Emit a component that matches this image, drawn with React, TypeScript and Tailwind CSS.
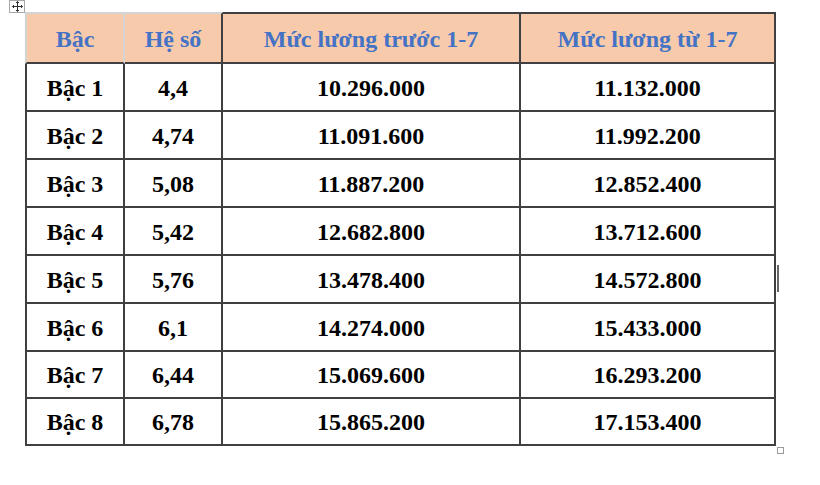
import React from "react";

const rows: [string, string, string, string][] = [
  ["Bậc 1", "4,4", "10.296.000", "11.132.000"],
  ["Bậc 2", "4,74", "11.091.600", "11.992.200"],
  ["Bậc 3", "5,08", "11.887.200", "12.852.400"],
  ["Bậc 4", "5,42", "12.682.800", "13.712.600"],
  ["Bậc 5", "5,76", "13.478.400", "14.572.800"],
  ["Bậc 6", "6,1", "14.274.000", "15.433.000"],
  ["Bậc 7", "6,44", "15.069.600", "16.293.200"],
  ["Bậc 8", "6,78", "15.865.200", "17.153.400"],
];

function MoveIcon() {
  return (
    <svg width="11" height="11" viewBox="0 0 11 11" fill="none" stroke="#333" strokeWidth="1">
      <path d="M5.5 0.5v10M0.5 5.5h10" />
      <path d="M4 2l1.5-1.5L7 2M4 9l1.5 1.5L7 9M2 4L0.5 5.5 2 7M9 4l1.5 1.5L9 7" />
    </svg>
  );
}

export default function App() {
  const font = { fontFamily: '"Liberation Serif", "Times New Roman", serif' };
  return (
    <div className="relative w-[820px] h-[485px] bg-white pl-[25px] pt-[12px]" style={font}>
      {/* table move handle */}
      <div className="absolute left-[9px] top-0 w-[16px] h-[13px] border border-[#a8a8a8] bg-white flex items-center justify-center">
        <MoveIcon />
      </div>
      <div className="grid grid-cols-[100px_98px_298px_255px] w-[751px] font-bold text-[24px] leading-none">
        <div className="h-[52px] pt-[2px] bg-[#f7caac] text-[#4472c4] flex items-center justify-center border-l-2 border-t-2 border-r-2 border-b-2 border-l-[#d4d4d4] border-t-[#d4d4d4] border-r-[#d4d4d4] border-b-[#404040]">
          Bậc
        </div>
        <div className="h-[52px] pt-[2px] bg-[#f7caac] text-[#4472c4] flex items-center justify-center border-t-2 border-r-2 border-b-2 border-t-[#d4d4d4] border-r-[#404040] border-b-[#404040]">
          Hệ số
        </div>
        <div className="h-[52px] pt-[2px] bg-[#f7caac] text-[#4472c4] flex items-center justify-center border-t-2 border-r-2 border-b-2 border-[#404040]">
          Mức lương trước 1-7
        </div>
        <div className="h-[52px] pt-[2px] bg-[#f7caac] text-[#4472c4] flex items-center justify-center border-t-2 border-r-2 border-b-2 border-[#404040]">
          Mức lương từ 1-7
        </div>
        {rows.map((r, i) => {
          const h = i >= 6 ? "h-[47px]" : "h-[48px]";
          return (
            <React.Fragment key={i}>
              <div className={`${h} pt-[1px] flex items-center justify-center text-black border-l-2 border-r-2 border-b-2 border-[#404040]`}>
                {r[0]}
              </div>
              <div className={`${h} pt-[1px] flex items-center justify-center text-black border-r-2 border-b-2 border-[#404040]`}>
                {r[1]}
              </div>
              <div className={`${h} pt-[1px] flex items-center justify-center text-black border-r-2 border-b-2 border-[#404040]`}>
                {r[2]}
              </div>
              <div className={`${h} pt-[1px] flex items-center justify-center text-black border-r-2 border-b-2 border-[#404040]`}>
                {r[3]}
              </div>
            </React.Fragment>
          );
        })}
      </div>
      {/* text cursor */}
      <div className="absolute left-[777px] top-[265px] w-[2px] h-[27px] bg-[#666]" />
      {/* resize handle */}
      <div className="absolute left-[777px] top-[447px] w-[7px] h-[7px] border border-[#9a9a9a] bg-white" />
    </div>
  );
}
